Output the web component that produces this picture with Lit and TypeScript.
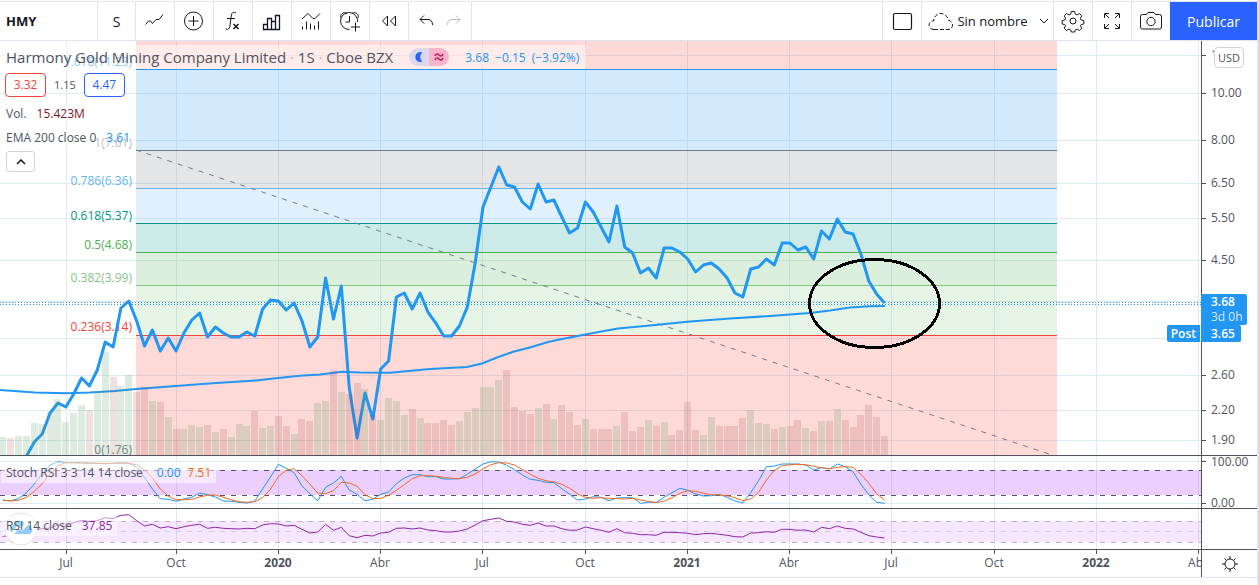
import { LitElement, html, svg, css } from "lit";
import { customElement } from "lit/decorators.js";

const PLOT_W = 1201;
const MAIN_H = 414;
const STOCH_H = 52;
const RSI_H = 40;

const pct = (v: number, total: number) => `${(v / total) * 100}%`;
const barX = (i: number) => 128.8 + 7.872 * i;
const FIRST = -16;

const TIME_TICKS: [number, string, boolean][] = [
  [66, "Jul", false], [176, "Oct", false], [278, "2020", true], [380, "Abr", false],
  [482, "Jul", false], [585, "Oct", false], [687, "2021", true], [789, "Abr", false],
  [891, "Jul", false], [994, "Oct", false], [1096, "2022", true], [1198, "Abr", false],
];

const PRICE_GRID: [number, string][] = [
  [14, "12.00"], [52, "10.00"], [99, "8.00"], [142, "6.50"], [177, "5.50"], [219, "4.50"],
  [260, ""], [297, ""], [334, "2.60"], [369, "2.20"], [399, "1.90"],
];

const FIB_BANDS: [number, number, string][] = [
  [0, 28, "#f44336"], [28, 109, "#2196f3"], [109, 147, "#787b86"], [147, 182, "#64b5f6"],
  [182, 211, "#009688"], [211, 244, "#4caf50"], [244, 294, "#81c784"], [294, 414, "#f44336"],
];

const FIB_LEVELS: [number, string, string][] = [
  [28, "1.618(11.23)", "#2196f3"], [109, "1(7.61)", "#787b86"], [147, "0.786(6.36)", "#64b5f6"],
  [182, "0.618(5.37)", "#009688"], [211, "0.5(4.68)", "#4caf50"], [244, "0.382(3.99)", "#81c784"],
  [294, "0.236(3.14)", "#f44336"], [416, "0(1.76)", "#787b86"],
];

// Weekly volume; the letter marks a rising (g) or falling (r) week.
const VOLUME =
  "18g 17r 19g 19g 32g 31g 44g 56g 33g 42g 50g 45r 64g 103g 78r 69g 80g 63r 68r 54g 53r 38g 26r 26g 30g 28g 30r 23g 26r 18g 31g 29g 44r 27g 29g 39r 29r 21g 36r 34r 52g 54g 85r 63g 61r 72r 66g 40r 35g 57g 54g 40g 46r 37g 32r 32r 35r 30r 34g 43g 47g 68g 68g 75g 85r 48r 44r 41r 47g 51r 36g 50r 43r 30r 36g 26r 26r 26r 29g 43r 24r 28r 35g 29r 33g 20r 25r 53r 25r 20g 38g 29r 29r 29r 37r 45g 32g 31g 26r 28g 29r 35r 27g 24r 34g 34r 46g 35r 28r 40r 50r 38r 19r"
    .split(" ")
    .map((s) => ({ h: parseInt(s, 10), up: s.endsWith("g") }));

const PRICE = [
  456, 442, 434, 413, 403, 407, 394, 378, 386, 370, 342, 347, 308, 301, 321, 346, 330, 351, 338, 351, 333, 320, 313, 337,
  327, 333, 337, 337, 332, 336, 309, 300, 301, 310, 303, 321, 347, 337, 278, 319, 286, 387, 438, 393, 419, 369, 361, 297,
  293, 309, 293, 312, 323, 336, 336, 326, 307, 263, 207, 187, 167, 185, 187, 202, 209, 184, 202, 200, 217, 233, 228, 202,
  212, 227, 242, 206, 247, 253, 273, 268, 278, 248, 248, 252, 259, 272, 265, 263, 269, 278, 293, 297, 269, 267, 259, 265,
  243, 243, 250, 247, 259, 231, 239, 219, 232, 234, 254, 281, 294, 303,
];

const EMA: [number, number][] = [
  [0, 390], [35, 392.5], [66, 393.3], [90, 392.5], [115, 391], [136, 389], [176, 386], [216, 383], [256, 380.5],
  [278, 378], [300, 375.7], [320, 374.5], [342, 371.8], [360, 372.5], [390, 372.7], [430, 369], [467, 367], [482, 363.5],
  [497, 357.5], [514, 351.5], [530, 347.5], [548, 342], [562, 339], [580, 335.5], [600, 331.7], [618, 328.5], [650, 325.5],
  [690, 321.5], [730, 318.5], [770, 316], [810, 313], [830, 310.5], [850, 307.5], [870, 306.3], [885, 306],
];

// Oscillator samples are stored at three units per pixel.
const STOCH_K = [
  151, 152, 146, 128, 102, 72, 45, 35, 38, 38, 39, 40, 40, 41, 40, 39, 39, 52, 82, 117, 146, 148, 154, 147, 142, 129, 134,
  141, 153, 154, 157, 159, 153, 117, 81, 43, 55, 68, 108, 131, 152, 112, 99, 79, 120, 133, 152, 148, 133, 126, 101, 84, 74,
  74, 80, 80, 87, 87, 86, 73, 57, 42, 35, 36, 46, 59, 75, 88, 91, 97, 98, 116, 133, 150, 147, 140, 142, 152, 144, 143, 143,
  160, 157, 157, 142, 128, 115, 121, 132, 138, 137, 133, 142, 153, 159, 128, 92, 50, 48, 42, 42, 42, 45, 60, 53, 57, 42, 50,
  65, 103, 134, 157, 160,
];
const STOCH_D = [
  150, 153, 151, 142, 124, 101, 71, 47, 38, 38, 38, 39, 40, 41, 40, 39, 40, 44, 60, 84, 117, 138, 149, 149, 148, 141, 136,
  135, 142, 149, 155, 157, 155, 143, 118, 80, 61, 56, 77, 102, 129, 131, 122, 97, 99, 109, 134, 146, 145, 136, 121, 104, 86,
  77, 77, 79, 82, 85, 86, 82, 72, 56, 44, 38, 39, 45, 59, 73, 85, 92, 96, 103, 115, 131, 142, 145, 143, 145, 146, 147, 145,
  150, 154, 158, 153, 143, 130, 122, 124, 130, 134, 135, 137, 143, 152, 147, 127, 90, 62, 47, 44, 43, 44, 49, 53, 56, 52, 50,
  52, 73, 100, 131, 150,
];
const RSI = [
  259, 256, 255, 254, 240, 236, 234, 225, 228, 218, 211, 214, 212, 203, 206, 196, 194, 212, 228, 223, 234, 230, 236, 230,
  226, 223, 235, 232, 235, 236, 237, 235, 236, 225, 221, 222, 228, 226, 238, 249, 246, 223, 241, 232, 257, 263, 256, 258,
  249, 247, 235, 234, 237, 234, 240, 242, 246, 246, 243, 237, 225, 212, 208, 204, 214, 216, 223, 226, 219, 228, 228, 236,
  241, 240, 231, 236, 241, 247, 236, 248, 250, 254, 254, 256, 247, 247, 248, 250, 254, 251, 250, 253, 256, 260, 261, 249,
  248, 245, 247, 238, 238, 241, 240, 246, 232, 236, 228, 235, 237, 247, 257, 261, 264,
];

const series = (values: number[], first: number, y: (v: number) => number) =>
  values.map((v, k) => `${barX(first + k).toFixed(1)},${y(v).toFixed(1)}`).join(" ");

const verticals = (height: number) =>
  TIME_TICKS.map(([x]) => svg`<line class="grid" x1=${x + 0.5} x2=${x + 0.5} y1="0" y2=${height} />`);

const icons = {
  line: svg`<path d="M4.500 17.500l3-3.500h2l2 2.500 3.500-4h3l4-5" />`,
  compare: svg`<circle cx="13.500" cy="14" r="9" /><path d="M13.500 9v10M8.500 14h10" />`,
  fx: svg`<path d="M17 6c-2.500-1.500-4.200-.5-4.600 2l-1.600 11.500c-.4 2.500-1.800 3.500-4 2.500M8 11.500h8" /><path d="M14.500 17l5 5M19.500 17l-5 5" stroke-width="1.500" />`,
  bars: svg`<path stroke-width="1.300" d="M5.500 17.500h4v5h-4zM9.500 11.500h4v11h-4zM13.500 14.500h4v8h-4zM17.500 8.500h4v14h-4z" />`,
  strategy: svg`<path d="M5 12l6-5.500 5 5h2l5-5M5.500 22.500v-3M9.500 22.500v-8M13.500 22.500v-6M17.500 22.500v-4M21.500 22.500v-8" />`,
  alarm: svg`<path d="M21.500 15a8.500 8.500 0 1 0-8 7.500M13.500 9v6h-4M5 11c-1.500-3.500 2.500-7 6-4.500M22 11c1.500-3.500-2.500-7-6-4.500M19.500 15.500v9M15 20h9" />`,
  replay: svg`<path d="M12.500 9v10l-5-5zM20.500 9v10l-5-5z" />`,
  undo: svg`<path d="M8 12.500h8c3 0 4.500 2 4.500 5.500M12 8.500l-4 4 4 4" />`,
  square: svg`<rect x="5.500" y="6.500" width="18" height="16" rx="1.500" stroke-width="1.200" />`,
  cloud: svg`<path stroke-dasharray="4 2" d="M8 22.500c-4.500 0-6.500-5-3.500-7.500 1-1 2.500-1 3-1 .5-4.500 3.500-7.500 7.500-7.500s6.500 3 7 6.500c3 .5 4.500 3 4.500 5 0 2.500-2 4.500-4.500 4.500z" />`,
  chevron: svg`<path d="M4 6l4 4 4-4" />`,
  gear: svg`<circle cx="14" cy="14" r="3" /><path d="M12.300 4.500h3.400l.6 2.600 1.800.8 2.300-1.400 2.400 2.400-1.400 2.300.8 1.800 2.600.6v3.400l-2.600.6-.8 1.200 1.400 2.300-2.400 2.400-2.300-1.400-1.800.8-.6 2.100h-3.400l-.6-2.100-1.800-.8-2.300 1.400-2.400-2.400 1.400-2.300-.8-1.200-2.600-.6v-3.400l2.600-.6.8-1.800-1.400-2.300 2.400-2.400 2.300 1.400 1.800-.8z" stroke-linejoin="round" />`,
  full: svg`<path d="M6.500 11v-4.500h4.500M17 6.500h4.500v4.500M21.500 17v4.500h-4.500M11 21.500h-4.500v-4.500M7 7l4 4M21 7l-4 4M21 21l-4-4M7 21l4-4" />`,
  camera: svg`<path d="M9.500 7.500l1.500-2h6l1.500 2h4a2 2 0 0 1 2 2v10.500a2 2 0 0 1-2 2h-17a2 2 0 0 1-2-2v-10.500a2 2 0 0 1 2-2z" /><circle cx="14" cy="14.500" r="4.200" />`,
};

const icon = (shape: unknown, size = 28) =>
  html`<svg class="icon" width=${size} height=${size} viewBox=${`0 0 ${size} ${size}`} aria-hidden="true">${shape}</svg>`;

@customElement("app-toolbar")
export class AppToolbar extends LitElement {
  static styles = css`
    :host { display: block; padding-top: 1px; }
    .bar { display: flex; height: 38px; border-top: 1px solid #e0e3eb; border-bottom: 1px solid #e0e3eb; }
    .left, .right { display: flex; }
    .right { margin-left: auto; }
    button {
      font: 14px "Open Sans", "Noto Sans", sans-serif; color: #131722; background: #fff; border: 0 solid #e0e3eb;
      padding: 0; width: 39px; box-sizing: border-box; display: flex; align-items: center; justify-content: center;
    }
    .left > * { border-right: 1px solid #e0e3eb; }
    .right > * { border-left-width: 1px; }
    .icon { fill: none; stroke: currentColor; stroke-width: 1; flex: none; }
    .symbol { width: 98px; justify-content: flex-start; padding-left: 6px; font-size: 13px; font-weight: 700; }
    .interval { width: 38px; }
    .history { display: flex; width: 62px; justify-content: center; }
    .history button { width: 28px; }
    .history button:disabled { color: #b8bbc4; }
    .flip { transform: scaleX(-1); }
    .layout { width: 132px; padding: 0 1px 0 4px; font-size: 13px; gap: 3px; }
    .layout span { margin-right: 5px; }
    .publish { width: 87px; border: 0; background: #2962ff; color: #fff; font-weight: 500; font-size: 14px; }
  `;
  render() {
    return html`<header class="bar">
      <div class="left">
        <button class="symbol">HMY</button>
        <button class="interval">S</button>
        <button aria-label="Estilo">${icon(icons.line)}</button>
        <button aria-label="Comparar">${icon(icons.compare)}</button>
        <button aria-label="Indicadores">${icon(icons.fx)}</button>
        <button aria-label="Datos financieros">${icon(icons.bars)}</button>
        <button aria-label="Plantillas">${icon(icons.strategy)}</button>
        <button aria-label="Alerta">${icon(icons.alarm)}</button>
        <button aria-label="Repetición">${icon(icons.replay)}</button>
        <div class="history">
          <button aria-label="Deshacer">${icon(icons.undo)}</button>
          <button aria-label="Rehacer" class="flip" disabled>${icon(icons.undo)}</button>
        </div>
      </div>
      <div class="right">
        <button aria-label="Disposición">${icon(icons.square)}</button>
        <button class="layout">${icon(icons.cloud)}<span>Sin nombre</span>${icon(icons.chevron, 16)}</button>
        <button aria-label="Ajustes">${icon(icons.gear)}</button>
        <button aria-label="Pantalla completa">${icon(icons.full)}</button>
        <button aria-label="Captura">${icon(icons.camera)}</button>
        <button class="publish">Publicar</button>
      </div>
    </header>`;
  }
}

@customElement("app-root")
export class AppRoot extends LitElement {
  static styles = css`
    :host {
      display: flex; flex-direction: column; box-sizing: border-box; height: 100vh; min-height: 400px;
      padding-bottom: 7px; border-right: 2px solid #e0e3eb; background: #fff; color: #50535e;
      font: 12px/16px "Open Sans", "Noto Sans", sans-serif; overflow: hidden;
    }
    .pane { display: grid; grid-template-columns: minmax(0, 1fr) 56px; border-bottom: 1px solid #50535e; }
    .main { flex: 1; min-height: 0; }
    .stoch { height: 52px; }
    .rsi { height: 40px; }
    .time { height: 27px; border-color: #e0e3eb; }
    .plot { display: grid; position: relative; min-width: 0; min-height: 0; overflow: hidden; }
    .plot > * { grid-area: 1 / 1; }
    .canvas { width: 100%; height: 100%; display: block; min-height: 0; }
    .axis { border-left: 1px solid #50535e; position: relative; min-height: 0; }
    .axis svg { display: block; overflow: visible; }
    text { font-size: 12px; fill: #50535e; dominant-baseline: central; }
    .bold { font-weight: 700; }
    .grid { stroke: #dfebf3; shape-rendering: crispEdges; }
    .tick { stroke: #50535e; shape-rendering: crispEdges; }
    .level, .dash { shape-rendering: crispEdges; }
    .dash { stroke-dasharray: 5 6; }
    line, polyline, ellipse { fill: none; vector-effect: non-scaling-stroke; }
    .price { stroke: #2196f3; stroke-width: 3; stroke-linejoin: round; }
    .ema { stroke: #2196f3; stroke-width: 2; }
    .dots { stroke: #2196f3; stroke-dasharray: 1 2; shape-rendering: crispEdges; }
    .trend { stroke: #787b86; stroke-dasharray: 5 6; }
    .mark { stroke: #000; stroke-width: 3; shape-rendering: crispEdges; }
    .up { fill: rgba(88, 157, 100, 0.2); }
    .down { fill: rgba(153, 60, 70, 0.16); }
    .legend { display: flex; flex-direction: column; align-items: flex-start; justify-self: start; align-self: start; position: relative; }
    .veil { background: rgba(255, 255, 255, 0.5); }
    .title { display: flex; align-items: center; height: 24px; margin-top: 4px; padding: 0 7px 0 6px; font-size: 15px; white-space: nowrap; }
    .title h1 { font: inherit; margin: 0; }
    .title i { font-style: normal; color: #b2b5be; }
    .badges { display: flex; margin: 0 16px; border-radius: 9px; overflow: hidden; }
    .badges span { width: 20px; height: 18px; display: flex; align-items: center; justify-content: center; }
    .moon { background: #dcd9ee; }
    .approx { background: #f9b3ca; }
    .change { font-size: 12px; color: #2196f3; display: flex; gap: 6px; padding-top: 1px; }
    .quotes { display: flex; align-items: center; gap: 8px; margin: 4px 0 0 5px; }
    .quotes button { width: 41px; height: 24px; padding: 0; border: 1px solid; border-radius: 4px; background: #fff; font: inherit; }
    .quotes span { font-size: 11px; }
    .sell { color: #f44336; }
    .buy { color: #2962ff; }
    .row { display: flex; gap: 10px; height: 20px; align-items: center; padding: 0 5px; margin-left: 1px; white-space: nowrap; }
    .vol { margin-top: 7px; }
    .ema-row { margin-top: 4px; }
    .maroon { color: #801922; }
    .blue { color: #2196f3; }
    .orange { color: #ff6d00; }
    .purple { color: #8e24aa; }
    .collapse { width: 29px; height: 21px; margin: 3px 0 0 6px; padding: 0; border: 1px solid #d1d4dc; border-radius: 3px; background: #fff; display: flex; align-items: center; justify-content: center; }
    .stoch .row { margin-top: 6px; height: 21px; gap: 14px; }
    .rsi .row { margin-top: 7px; height: 20px; }
    .k { display: flex; gap: 7px; }
    .logo { align-self: center; margin-left: 4px; z-index: 0; }
    .tag { position: absolute; background: #2196f3; color: #fff; box-sizing: border-box; font-weight: 600; line-height: 15px; }
    .tag small { display: block; font-size: 12px; font-weight: 400; opacity: 0.8; }
    .last { top: 61.2%; left: -1px; padding: 0 4px 0 10px; width: 46px; height: 31px; border-radius: 0 2px 2px 0; white-space: nowrap; }
    .after { top: 68.6%; left: -1px; padding: 1px 0 0 10px; width: 40px; height: 17px; border-radius: 0 2px 2px 0; }
    .post { top: 68.6%; right: 1px; padding: 1px 4px 0; height: 17px; border-radius: 2px 0 0 2px; }
    .currency { position: absolute; top: 6px; left: 12px; width: 30px; height: 21px; box-sizing: border-box; padding: 0; border: 1px solid #d1d4dc; border-radius: 4px; background: #fff; color: #50535e; font: 11px "Open Sans", "Noto Sans", sans-serif; }
    .settings { border: 0; padding: 0; background: none; width: 100%; height: 100%; display: flex; align-items: center; justify-content: center; }
  `;

  private mainPlot() {
    return html`<svg class="canvas" role="img" aria-label="Harmony Gold Mining Company Limited">
      <svg width="100%" height="100%" viewBox="0 0 ${PLOT_W} ${MAIN_H}" preserveAspectRatio="none">
        ${PRICE_GRID.map(([y]) => svg`<line class="grid" x1="0" x2=${PLOT_W} y1=${y + 0.5} y2=${y + 0.5} />`)}
        ${verticals(MAIN_H)}
        ${FIB_BANDS.map(([a, b, c]) => svg`<rect x="136" width="921" y=${a} height=${b - a} fill=${c} fill-opacity="0.2" />`)}
        ${FIB_LEVELS.map(([y, , c]) => svg`<line class="level" x1="136" x2="1057" y1=${y + 0.5} y2=${y + 0.5} stroke=${c} />`)}
        <line class="trend" x1="136" y1="109" x2="1052" y2="414" />
      </svg>
      ${FIB_LEVELS.map(
        ([y, label, c]) => svg`<text x=${pct(132, PLOT_W)} y=${pct(y - 8, MAIN_H)} text-anchor="end" style="fill:${c}">${label}</text>`,
      )}
      <svg width="100%" height="100%" viewBox="0 0 ${PLOT_W} ${MAIN_H}" preserveAspectRatio="none">
        <line class="dots" x1="0" x2=${PLOT_W} y1="261.5" y2="261.5" />
        <line class="dots" x1="0" x2=${PLOT_W} y1="263.5" y2="263.5" />
        <polyline class="ema" points=${EMA.map(([x, y]) => `${x},${y - 41}`).join(" ")} />
        <polyline class="price" points=${series(PRICE, -13, (v) => v - 41)} />
        ${VOLUME.map((v, k) => svg`<rect class=${v.up ? "up" : "down"} x=${Math.round(barX(FIRST + k) - 3.5)} width="7" y=${MAIN_H - v.h} height=${v.h} />`)}
        <ellipse class="mark" cx="874.5" cy="262.5" rx="65" ry="44" />
      </svg>
    </svg>`;
  }

  private band(height: number, top: number, bottom: number, fill: string) {
    return svg`${verticals(height)}<rect x="0" width=${PLOT_W} y=${top} height=${bottom - top} fill=${fill} />`;
  }

  render() {
    return html`
      <app-toolbar></app-toolbar>
      <section class="pane main">
        <div class="plot">
          ${this.mainPlot()}
          <div class="legend">
            <div class="title veil">
              <h1>Harmony Gold Mining Company Limited <i>·</i> 1S <i>·</i> Cboe BZX</h1>
              <div class="badges">
                <span class="moon"><svg width="10" height="10" viewBox="0 0 10 10"><path fill="#2962ff" d="M8.500 .5A5 5 0 1 0 8.500 9.500A5.500 5.500 0 0 1 8.500 .5z" /></svg></span>
                <span class="approx"><svg width="10" height="10" viewBox="0 0 10 10" fill="none" stroke="#c2185b" stroke-width="1.500"><path d="M1 4c1-3 3-2 4-1s3 2 4-1M1 8c1-3 3-2 4-1s3 2 4-1" /></svg></span>
              </div>
              <div class="change"><span>3.68</span><span>−0.15</span><span>(−3.92%)</span></div>
            </div>
            <div class="quotes">
              <button class="sell">3.32</button><span>1.15</span><button class="buy">4.47</button>
            </div>
            <div class="row veil vol"><span>Vol.</span><span class="maroon">15.423M</span></div>
            <div class="row veil ema-row"><span>EMA 200 close 0</span><span class="blue">3.61</span></div>
            <button class="collapse" aria-label="Contraer leyenda">
              <svg width="10" height="6" viewBox="0 0 10 6" fill="none" stroke="#131722" stroke-width="1.500"><path d="M1 5l4-4 4 4" /></svg>
            </button>
          </div>
          <span class="tag post">Post</span>
        </div>
        <div class="axis">
          <svg width="100%" height="100%">
            <svg width="5" height="100%" viewBox="0 0 5 ${MAIN_H}" preserveAspectRatio="none">
              ${PRICE_GRID.filter(([, t]) => t).map(([y]) => svg`<line class="tick" x1="0" x2="4" y1=${y + 0.5} y2=${y + 0.5} />`)}
            </svg>
            ${PRICE_GRID.map(([y, t]) => svg`<text x="9" y=${pct(y - 1, MAIN_H)}>${t}</text>`)}
          </svg>
          <button class="currency">USD</button>
          <span class="tag last">3.68<small>3d 0h</small></span>
          <span class="tag after">3.65</span>
        </div>
      </section>

      <section class="pane stoch">
        <div class="plot">
          <svg class="canvas" viewBox="0 0 ${PLOT_W} ${STOCH_H}" preserveAspectRatio="none">
            <line class="grid" x1="0" x2=${PLOT_W} y1="5.5" y2="5.5" />
            <line class="grid" x1="0" x2=${PLOT_W} y1="47.5" y2="47.5" />
            ${this.band(STOCH_H, 14, 39, "rgba(153, 21, 255, 0.2)")}
            <line class="dash" stroke="#5d4f70" x1="0" x2=${PLOT_W} y1="14.5" y2="14.5" />
            <line class="dash" stroke="#5d4f70" x1="0" x2=${PLOT_W} y1="39.5" y2="39.5" />
            <polyline stroke="#2196f3" points=${series(STOCH_K, FIRST, (v) => v / 3 - 6)} />
            <polyline stroke="#f4691c" points=${series(STOCH_D, FIRST, (v) => v / 3 - 6)} />
          </svg>
          <div class="legend">
            <div class="row veil"><span>Stoch RSI 3 3 14 14 close</span><span class="k"><span class="blue">0.00</span><span class="orange">7.51</span></span></div>
          </div>
        </div>
        <div class="axis">
          <svg width="100%" height="100%">
            <line class="tick" x1="0" x2="4" y1="5.5" y2="5.5" />
            <line class="tick" x1="0" x2="4" y1="47.5" y2="47.5" />
            <text x="9" y="5">100.00</text>
            <text x="9" y="46">0.00</text>
          </svg>
        </div>
      </section>

      <section class="pane rsi">
        <div class="plot">
          <svg class="canvas" viewBox="0 0 ${PLOT_W} ${RSI_H}" preserveAspectRatio="none">
            ${this.band(RSI_H, 12, 33, "rgba(153, 21, 255, 0.1)")}
            <line class="dash" stroke="#b9b0c1" x1="0" x2=${PLOT_W} y1="12.5" y2="12.5" />
            <line class="dash" stroke="#d6cade" x1="0" x2=${PLOT_W} y1="22.5" y2="22.5" />
            <line class="dash" stroke="#b9b0c1" x1="0" x2=${PLOT_W} y1="33.5" y2="33.5" />
            <polyline stroke="#8e24aa" points=${series(RSI, FIRST, (v) => v / 3 - 59)} />
          </svg>
          <svg class="logo" width="34" height="34" viewBox="0 0 34 34" aria-hidden="true">
            <circle cx="17" cy="17" r="16" fill="#fff" stroke="#dfe1e6" />
            <path fill="#3bb3e4" d="M7 20a4 4 0 0 1 2-7 7 7 0 0 1 12-2l-5 5-3-2-5 6z" />
            <path fill="#2196f3" d="M10 22l5-5 3 2 6-6a5 5 0 0 1 2 9z" />
          </svg>
          <div class="legend"><div class="row veil"><span>RSI 14 close</span><span class="purple">37.85</span></div></div>
        </div>
        <div class="axis"></div>
      </section>

      <section class="pane time">
        <div class="plot">
          <svg class="canvas">
            <svg width="100%" height="5" viewBox="0 0 ${PLOT_W} 5" preserveAspectRatio="none">
              ${TIME_TICKS.map(([x]) => svg`<line class="tick" x1=${x + 0.5} x2=${x + 0.5} y1="0" y2="4" />`)}
            </svg>
            ${TIME_TICKS.map(([x, t, b]) => svg`<text class=${b ? "bold" : ""} x=${pct(x, PLOT_W)} y="12" text-anchor="middle">${t}</text>`)}
          </svg>
        </div>
        <div class="axis">
          <button class="settings" aria-label="Ajustes de escala">
            <svg width="16" height="16" viewBox="0 0 16 16" fill="none" stroke="#131722"><circle cx="8" cy="8" r="5" /><path d="M8 0v3M8 13v3M0 8h3M13 8h3M2.500 2.500l2 2M11.500 11.500l2 2M13.500 2.500l-2 2M4.500 11.500l-2 2" /></svg>
          </button>
        </div>
      </section>
    `;
  }
}
